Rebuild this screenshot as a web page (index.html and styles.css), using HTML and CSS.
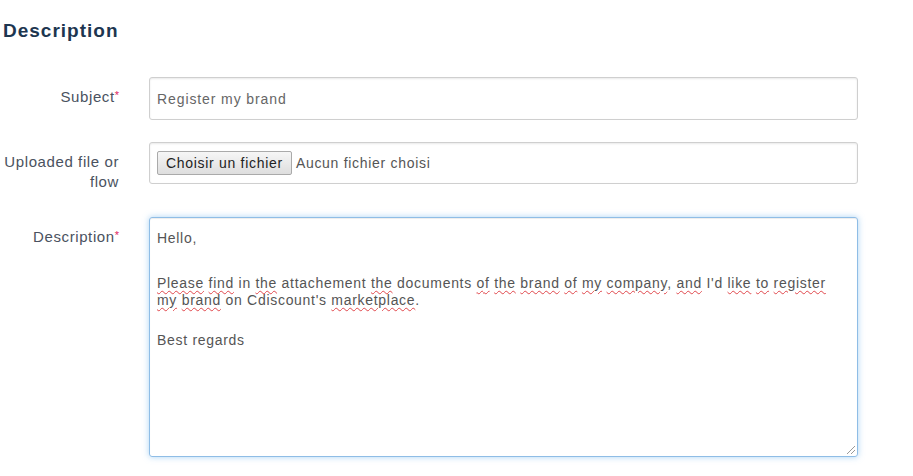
FILE: index.html
```html
<!DOCTYPE html>
<html>
<head>
<meta charset="utf-8">
<link rel="stylesheet" href="styles.css">
</head>
<body>
<div class="page">
  <h2 class="title">Description</h2>
  <div class="row">
    <label class="lbl">Subject<span class="req">*</span></label>
    <div class="ctrl"><div class="input">Register my brand</div></div>
  </div>
  <div class="row">
    <label class="lbl tall">Uploaded file or<br>flow</label>
    <div class="ctrl"><div class="input file"><span class="btn">Choisir un fichier</span><span class="none">Aucun fichier choisi</span></div></div>
  </div>
  <div class="row">
    <label class="lbl">Description<span class="req">*</span></label>
    <div class="ctrl">
      <div class="textarea">
        <p class="p1">Hello,</p>
        <p class="p2"><span class="sp">Please</span> <span class="sp">find</span> in <span class="sp">the</span> attachement <span class="sp">the</span> documents <span class="sp">of</span> <span class="sp">the</span> <span class="sp">brand</span> <span class="sp">of</span> <span class="sp">my</span> <span class="sp">company</span>, <span class="sp">and</span> I'd <span class="sp">like</span> <span class="sp">to</span> <span class="sp">register</span><br><span class="sp">my</span> <span class="sp">brand</span> on Cdiscount's <span class="sp">marketplace</span>.</p>
        <p class="p3">Best regards</p>
        <span class="grip"></span>
      </div>
    </div>
  </div>
</div>
</body>
</html>
```

FILE: styles.css
```css
html, body { margin: 0; padding: 0; background: #fff; }
body { font-family: "Liberation Sans", Arial, sans-serif; font-size: 14px; color: #555; }
.page { padding: 19px 0 0 3px; width: 855px; }
.title { margin: 0 0 35px 0; font-size: 19px; line-height: 23px; letter-spacing: 1px; font-weight: bold; color: #1d3650; }
.row { display: flex; align-items: flex-start; margin-bottom: 22px; }
.lbl { width: 116px; flex: none; text-align: right; padding-top: 10px; line-height: 20px; color: #4a5260; font-size: 15px; letter-spacing: 0.6px; white-space: nowrap; }
.lbl.tall { padding-bottom: 3px; }
.req { color: #e0245e; font-size: 11px; letter-spacing: 0; vertical-align: top; position: relative; top: -2px; }
.ctrl { margin-left: 30px; flex: 1; }
.input { height: 41px; border: 1px solid #cfcfcf; border-radius: 3px; box-shadow: inset 0 1px 2px rgba(0,0,0,.09); padding: 0 7px; display: flex; align-items: center; color: #666; letter-spacing: 0.9px; }
.input.file { height: 40px; padding-left: 7px; }
.btn { display: inline-block; height: 22px; line-height: 22px; padding: 0 8px; border: 1px solid #aaa; border-radius: 2px; background: linear-gradient(#f6f6f6, #dedede); color: #222; letter-spacing: 0.7px; }
.none { margin-left: 4px; color: #555; letter-spacing: 0.7px; }
.textarea { position: relative; border: 1px solid #8fbde6; border-radius: 3px; box-shadow: inset 0 1px 1px rgba(0,0,0,.075), 0 0 6px rgba(102,175,233,.55); padding: 12px 7px; box-sizing: border-box; height: 240px; line-height: 17px; color: #555; letter-spacing: 0.7px; }
.textarea p { margin: 0; }
.p1 { margin-bottom: 28px !important; }
.p2 { margin-bottom: 23px !important; }
.sp { text-decoration: underline wavy #e0474c; text-decoration-thickness: 1px; text-underline-offset: 2px; }
.grip { position: absolute; right: 2px; bottom: 2px; width: 8px; height: 8px; background: linear-gradient(135deg, transparent 45%, #999 45%, #999 55%, transparent 55%, transparent 70%, #999 70%, #999 80%, transparent 80%); }
```
